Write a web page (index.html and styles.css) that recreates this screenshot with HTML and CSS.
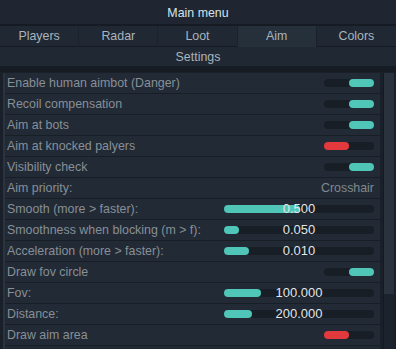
FILE: index.html
```html
<!DOCTYPE html>
<html>
<head>
<meta charset="utf-8">
<link rel="stylesheet" href="styles.css">
</head>
<body>
<div class="app">
  <div class="title">Main menu</div>
  <div class="tabs">
    <div class="tab">Players</div>
    <div class="tab">Radar</div>
    <div class="tab">Loot</div>
    <div class="tab active">Aim</div>
    <div class="tab">Colors</div>
  </div>
  <div class="sub">Settings</div>
  <div class="body">
    <div class="list">
      <div class="row"><span class="label">Enable human aimbot (Danger)</span><span class="toggle on"><i></i></span></div>
      <div class="row"><span class="label">Recoil compensation</span><span class="toggle on"><i></i></span></div>
      <div class="row"><span class="label">Aim at bots</span><span class="toggle on"><i></i></span></div>
      <div class="row"><span class="label">Aim at knocked palyers</span><span class="toggle off"><i></i></span></div>
      <div class="row"><span class="label">Visibility check</span><span class="toggle on"><i></i></span></div>
      <div class="row"><span class="label">Aim priority:</span><span class="combo">Crosshair</span></div>
      <div class="row"><span class="label">Smooth (more &gt; faster):</span><span class="slider"><i style="width:76px"></i><b>0.500</b></span></div>
      <div class="row"><span class="label">Smoothness when blocking (m &gt; f):</span><span class="slider"><i style="width:15px"></i><b>0.050</b></span></div>
      <div class="row"><span class="label">Acceleration (more &gt; faster):</span><span class="slider"><i style="width:25px"></i><b>0.010</b></span></div>
      <div class="row"><span class="label">Draw fov circle</span><span class="toggle on"><i></i></span></div>
      <div class="row"><span class="label">Fov:</span><span class="slider"><i style="width:37px"></i><b>100.000</b></span></div>
      <div class="row"><span class="label">Distance:</span><span class="slider"><i style="width:28px"></i><b>200.000</b></span></div>
      <div class="row"><span class="label">Draw aim area</span><span class="toggle off"><i></i></span></div>
    </div>
    <div class="scroll"><div class="thumb"></div></div>
  </div>
</div>
</body>
</html>
```
FILE: styles.css
```css
html, body {
  margin: 0;
  padding: 0;
  background: #1a2029;
}
body {
  font-family: "Liberation Sans", Arial, sans-serif;
  font-size: 12.4px;
  width: 396px;
  height: 349px;
  overflow: hidden;
}
.app {
  display: flex;
  flex-direction: column;
  height: 349px;
}
.title {
  height: 24px;
  line-height: 26px;
  text-align: center;
  color: #d3e3ea;
  background: #1f2631;
  border-bottom: 2px solid #161b23;
}
.tabs {
  display: grid;
  grid-template-columns: repeat(5, 1fr);
  height: 20px;
  background: #202833;
  border-bottom: 1px solid #161b23;
}
.tab {
  text-align: center;
  line-height: 21px;
  color: #a9b4bb;
  border-right: 1px solid #1b222c;
}
.tab:last-child { border-right: none; }
.tab.active {
  background: #26303b;
}
.sub {
  height: 19px;
  line-height: 20px;
  text-align: center;
  color: #a9b4bb;
  background: #202833;
  border-bottom: 6px solid #171c24;
}
.body {
  flex: 1;
  display: flex;
  gap: 3px;
  padding-left: 3px;
  padding-right: 2px;
  padding-top: 1px;
  min-height: 0;
}
.list {
  flex: 1;
  display: flex;
  flex-direction: column;
  border-left: 2px solid #2a333e;
  background: #212933;
}
.row {
  height: 20px;
  flex: none;
  display: flex;
  align-items: center;
  justify-content: space-between;
  padding: 0 4px 0 2px;
  border-bottom: 1px solid #181e26;
  background: #222a35;
}
.label {
  color: #878f97;
}
.toggle {
  width: 50px;
  height: 8px;
  border-radius: 4px;
  background: #181e26;
  display: flex;
  margin-right: 2px;
}
.toggle i {
  width: 25px;
  height: 8px;
  border-radius: 4px;
}
.toggle.on { justify-content: flex-end; }
.toggle.on i { background: #4fc6b7; }
.toggle.off i { background: #e23a3c; }
.combo {
  color: #80898f;
  margin-right: 2px;
}
.slider {
  position: relative;
  width: 150px;
  height: 8px;
  border-radius: 4px;
  background: #181e26;
  margin-right: 2px;
}
.slider i {
  position: absolute;
  left: 0;
  top: 0;
  height: 8px;
  border-radius: 4px;
  background: #4fc6b7;
}
.slider b {
  position: absolute;
  left: 0;
  right: 0;
  top: -5px;
  text-align: center;
  font-weight: normal;
  font-size: 13px;
  color: #e2e6e8;
  line-height: 18px;
}
.scroll {
  width: 10px;
  background: #1d232c;
  border-left: 1px solid #151a21;
}
.thumb {
  height: 221px;
  background: #2a323d;
}
```
